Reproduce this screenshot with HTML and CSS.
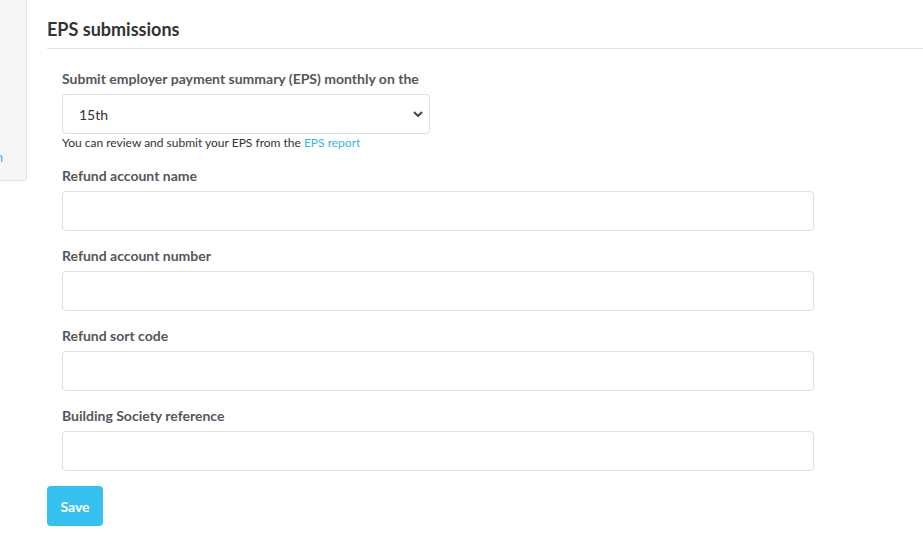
FILE: index.html
```html
<!DOCTYPE html>
<html lang="en">
  <head>
    <meta charset="UTF-8" />
    <meta name="viewport" content="width=device-width, initial-scale=1.0" />
    <title>EPS submissions</title>
    <link rel="stylesheet" href="styles.css">
  </head>
  <body>
    <aside class="sidebar">
      <a href="#" class="sidebar-link">Show more in</a>
    </aside>

    <main class="content">
      <h2 class="section-title">EPS submissions</h2>

      <form class="settings-form">
        <div class="field">
          <label for="eps-day">Submit employer payment summary (EPS) monthly on the</label>
          <div class="select-wrap">
            <select id="eps-day" class="select-input">
              <option>15th</option>
            </select>
            <svg class="select-arrow" width="10" height="6" viewBox="0 0 10 6">
              <path d="M1 1l4 4 4-4" fill="none" stroke="#444" stroke-width="2" />
            </svg>
          </div>
          <p class="help-text">You can review and submit your EPS from the <a href="#">EPS report</a></p>
        </div>

        <div class="field">
          <label for="refund-name">Refund account name</label>
          <input type="text" id="refund-name" class="text-input" />
        </div>

        <div class="field">
          <label for="refund-number">Refund account number</label>
          <input type="text" id="refund-number" class="text-input" />
        </div>

        <div class="field">
          <label for="refund-sort">Refund sort code</label>
          <input type="text" id="refund-sort" class="text-input" />
        </div>

        <div class="field">
          <label for="society-ref">Building Society reference</label>
          <input type="text" id="society-ref" class="text-input" />
        </div>
      </form>

      <button type="button" class="save-btn">Save</button>
    </main>
  </body>
</html>
```

FILE: styles.css
```css
/* General Styles */
body {
  font-family: Lato, "Open Sans", Arial, sans-serif;
  margin: 0;
  padding: 0;
  background: #fff;
  color: #333;
  display: flex;
  align-items: flex-start;
}

/* Sidebar (scrolled mostly out of view) */
.sidebar {
  width: 27px;
  height: 181px;
  flex-shrink: 0;
  background: #f6f6f7;
  border-right: 1px solid #e3e3e5;
  border-bottom: 1px solid #e3e3e5;
  border-bottom-right-radius: 4px;
  overflow: hidden;
  display: flex;
  justify-content: flex-end;
  align-items: flex-end;
  padding-right: 23px;
  padding-bottom: 15px;
  box-sizing: border-box;
}

.sidebar-link {
  color: #36b6ea;
  text-decoration: none;
  font-size: 13px;
  line-height: 16px;
  white-space: nowrap;
}

/* Main content */
.content {
  flex: 1;
  padding: 16px 0 0 20px;
}

.section-title {
  margin: 0;
  font-size: 18px;
  line-height: 26px;
  font-weight: 700;
  color: #333;
  padding-bottom: 6px;
  border-bottom: 1px solid #e3e3e5;
}

.settings-form {
  padding: 20px 0 0 15px;
}

.field {
  margin-bottom: 15px;
}

.field label {
  display: block;
  font-size: 14px;
  line-height: 20px;
  font-weight: 700;
  color: #54575d;
  margin-bottom: 5px;
}

.select-wrap {
  position: relative;
  width: 368px;
}

.select-input {
  appearance: none;
  width: 100%;
  height: 40px;
  padding: 0 16px;
  border: 1px solid #dcdee0;
  border-radius: 4px;
  background: #fff;
  font-family: inherit;
  font-size: 14px;
  color: #333;
}

.select-arrow {
  position: absolute;
  right: 7px;
  top: 17px;
}

.help-text {
  margin: 0;
  font-size: 12px;
  line-height: 17px;
  color: #333;
}

.help-text a {
  color: #36b6ea;
  text-decoration: none;
}

.text-input {
  display: block;
  width: 752px;
  height: 40px;
  box-sizing: border-box;
  border: 1px solid #dcdee0;
  border-radius: 4px;
  padding: 0 12px;
  font-family: inherit;
  font-size: 14px;
}

.save-btn {
  display: block;
  width: 56px;
  height: 40px;
  border: none;
  border-radius: 4px;
  background: #35c1f0;
  color: #fff;
  font-family: inherit;
  font-size: 14px;
  font-weight: 700;
  cursor: pointer;
}
```
